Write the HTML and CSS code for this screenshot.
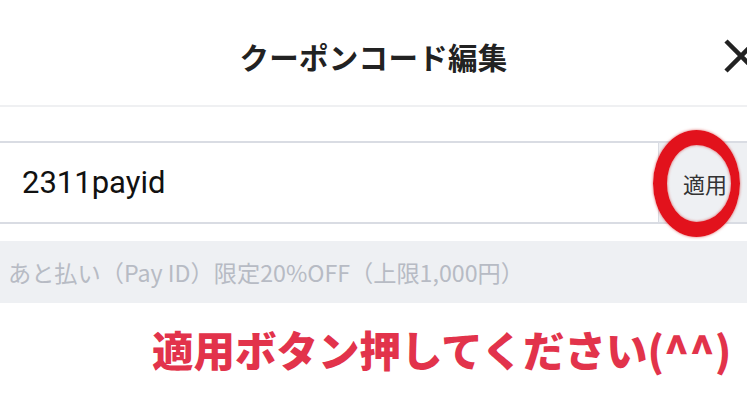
FILE: index.html
```html
<!DOCTYPE html>
<html lang="ja">
<head>
  <meta charset="UTF-8" />
  <title>クーポンコード編集</title>
  <link rel="stylesheet" href="styles.css">
</head>
<body>

<header class="modal-header">
  <h1>クーポンコード編集</h1>
  <button class="close-btn" aria-label="閉じる">
    <svg width="36" height="36" viewBox="0 0 36 36">
      <path d="M3 3 L33 33 M33 3 L3 33" stroke="#222" stroke-width="4.5" stroke-linecap="butt" fill="none"/>
    </svg>
  </button>
</header>

<div class="coupon-row">
  <input type="text" class="coupon-input" value="2311payid">
  <button class="apply-btn">適用</button>
  <span class="circle-mark"></span>
</div>

<p class="coupon-note">あと払い（Pay ID）限定20%OFF（上限1,000円）</p>

<p class="hint">適用ボタン押してください(^^)</p>

</body>
</html>
```

FILE: styles.css
```css
body {
  margin: 0;
  background: #fff;
  font-family: "Noto Sans CJK JP", "Noto Sans", sans-serif;
  overflow: hidden;
}

.modal-header {
  position: relative;
  height: 105px;
  display: flex;
  align-items: center;
  justify-content: center;
  border-bottom: 2px solid #eff0f2;
}

.modal-header h1 {
  margin: 0;
  padding-top: 6px;
  font-size: 29.5px;
  font-weight: 700;
  color: #222;
  letter-spacing: 0.3px;
}

.close-btn {
  position: absolute;
  right: -12px;
  top: 38px;
  padding: 0;
  border: none;
  background: none;
}

.close-btn svg {
  display: block;
}

.coupon-row {
  position: relative;
  display: flex;
  height: 79px;
  margin-top: 34px;
  border-top: 2px solid #d9dce3;
  border-bottom: 2px solid #d9dce3;
}

.coupon-input {
  flex: 1;
  border: none;
  outline: none;
  padding: 0 0 0 22px;
  font-family: "Roboto", "Noto Sans", sans-serif;
  font-size: 31px;
  color: #111;
  background: #fff;
}

.apply-btn {
  width: 89px;
  border: none;
  border-left: 1px solid #d9dce3;
  background: #eef0f3;
  font-family: "Noto Sans CJK JP", sans-serif;
  font-size: 22px;
  color: #333;
  padding: 0 0 0 24px;
  text-align: left;
}

.circle-mark {
  position: absolute;
  left: 653px;
  top: -13px;
  width: 64px;
  height: 77px;
  border-style: solid;
  border-color: #e2121c;
  border-width: 15px 9px 15px 14px;
  border-radius: 50%;
  box-shadow: 0 0 3px rgba(200, 0, 0, 0.6), inset 0 0 3px rgba(200, 0, 0, 0.6);
}

.coupon-note {
  margin: 17px 0 0;
  height: 62px;
  display: flex;
  align-items: center;
  padding-left: 8px;
  background: #eef0f3;
  font-size: 23.2px;
  color: #b7bbc4;
}

.hint {
  margin: 16px 0 0;
  padding-left: 152px;
  font-size: 41.5px;
  font-weight: 900;
  color: #e2334b;
}
```
